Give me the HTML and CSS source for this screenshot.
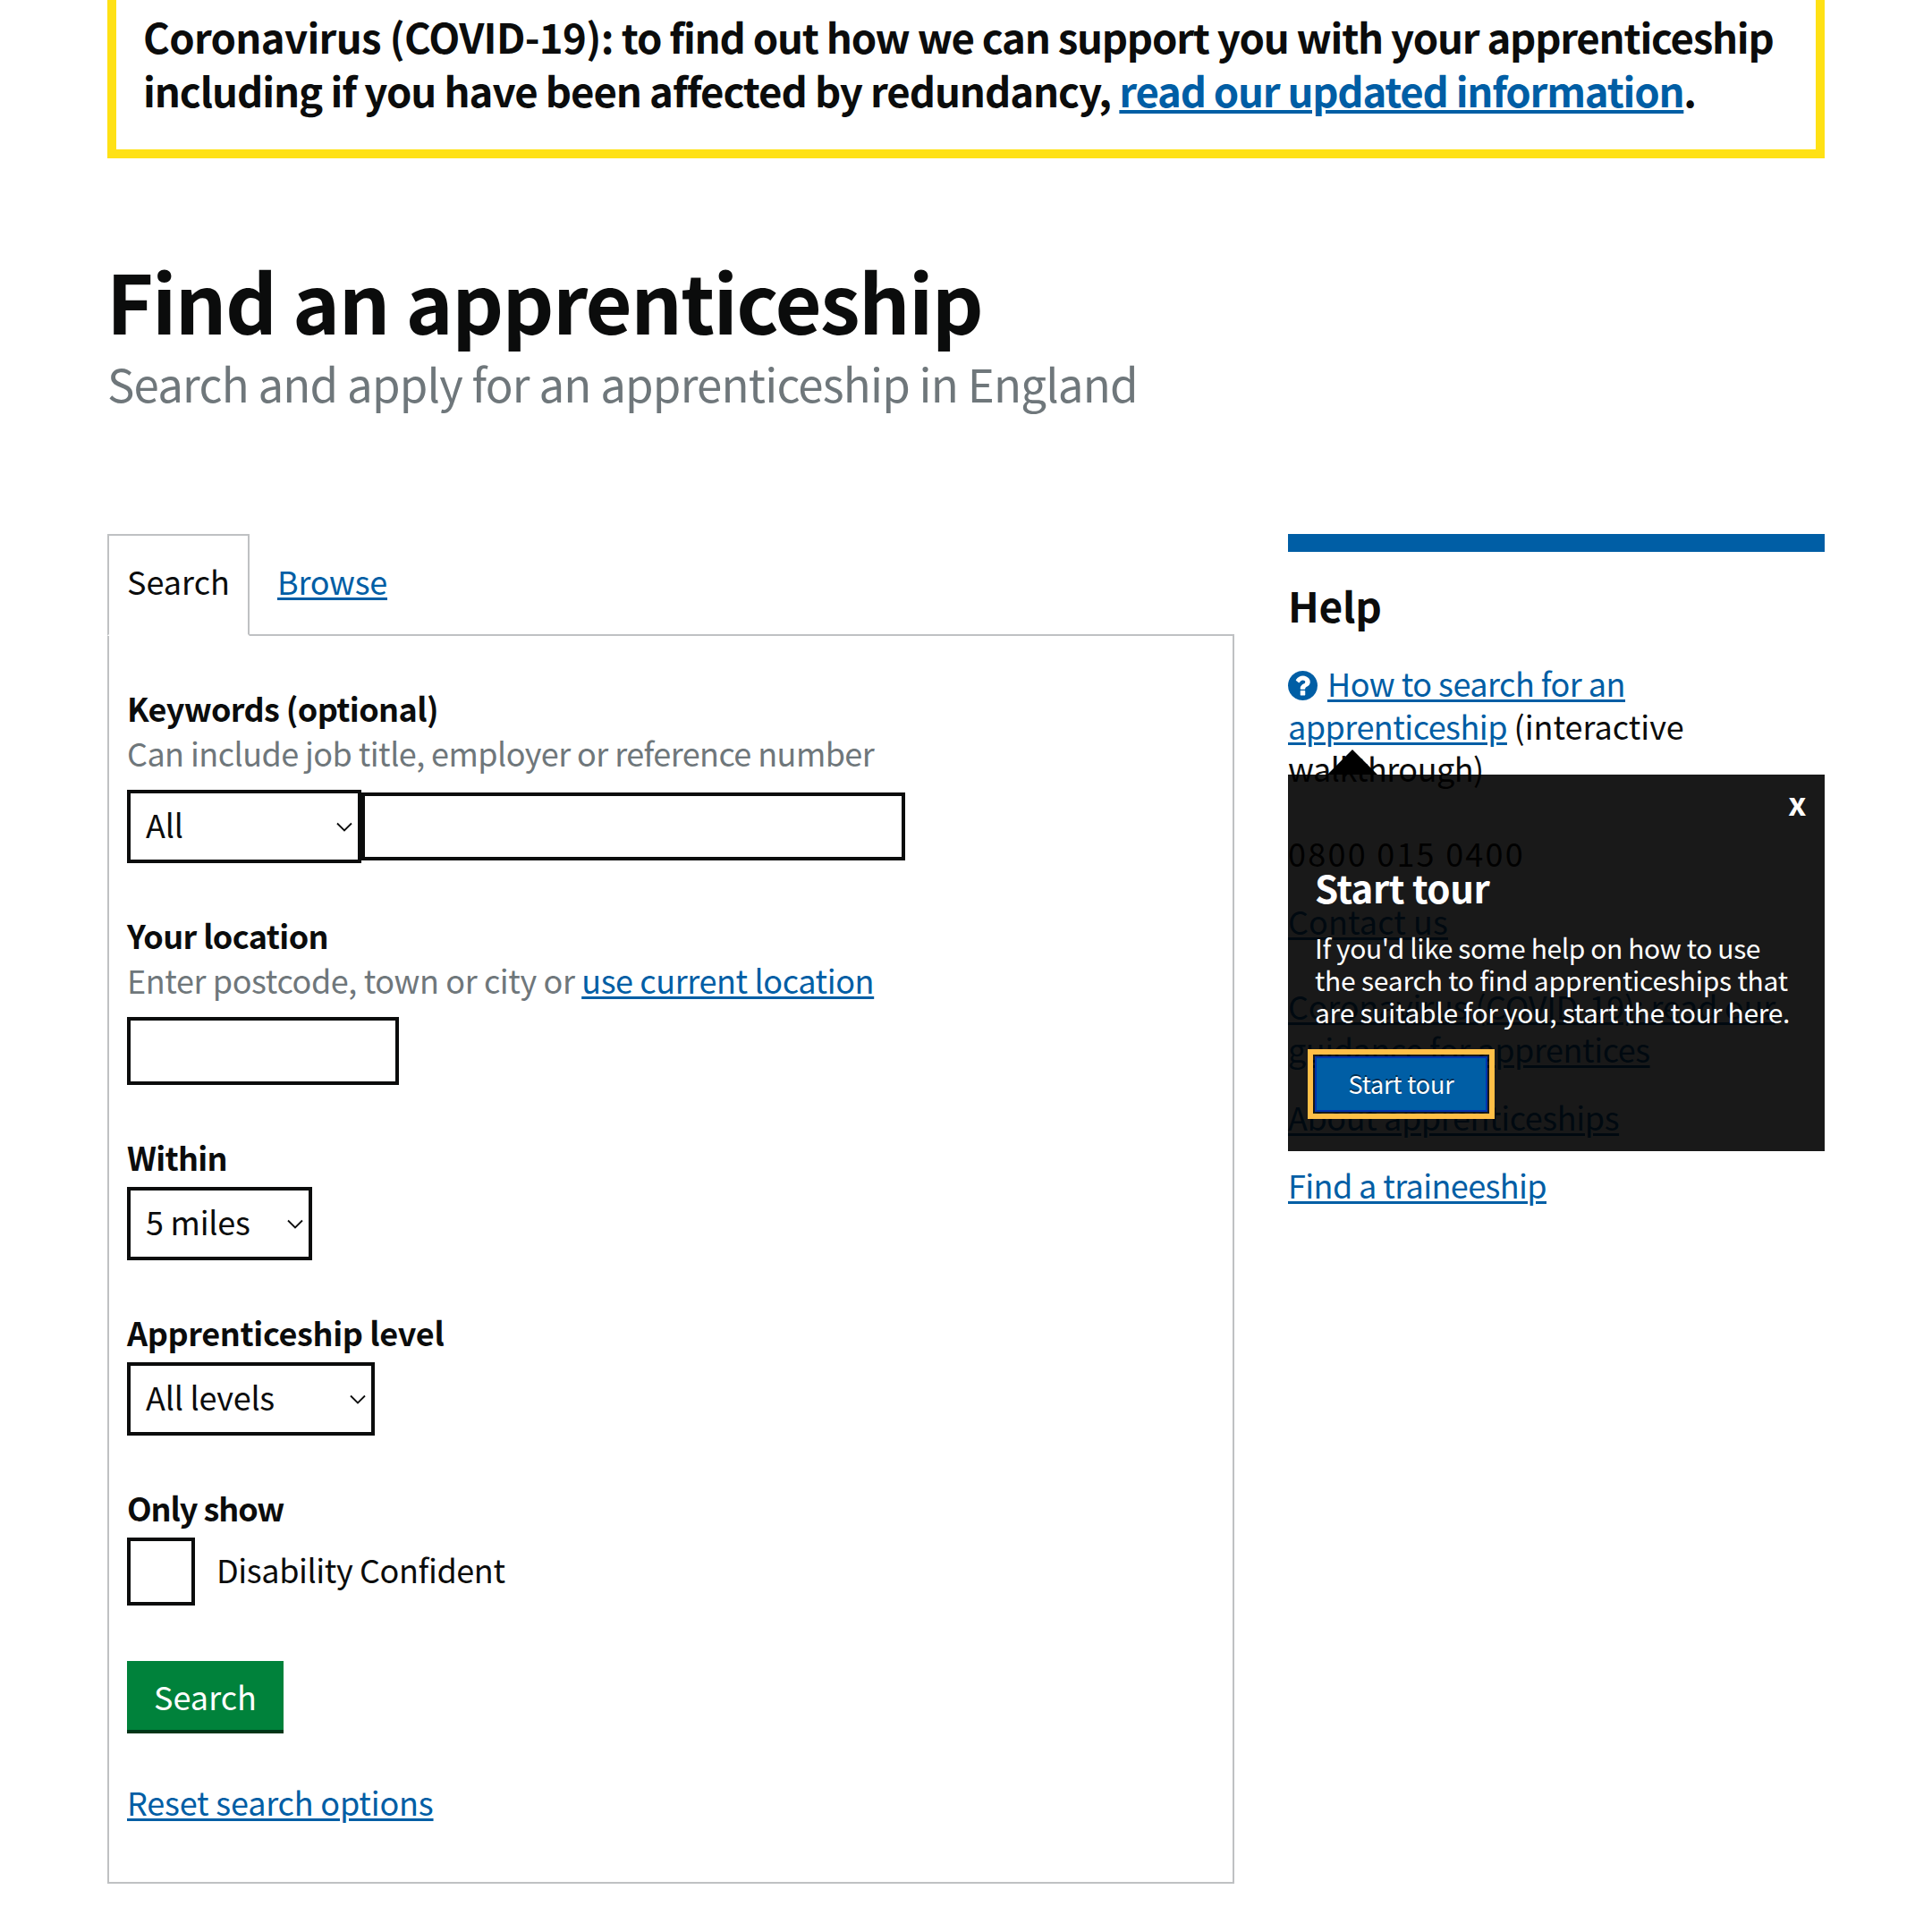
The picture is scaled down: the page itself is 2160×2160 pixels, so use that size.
FILE: index.html
```html
<!DOCTYPE html>
<html lang="en">
<head>
<meta charset="utf-8">
<title>Find an apprenticeship</title>
<link rel="stylesheet" href="styles.css">
</head>
<body>
<div class="page">
  <div class="banner">
    <p class="banner-text"><span class="banner-lead">Coronavirus (COVID-19):</span><span class="banner-rest"> to find out how we can support you with your apprenticeship</span><br>including if you have been affected by redundancy, <a class="banner-link" href="#">read our updated information</a>.</p>
  </div>

  <header class="heading">
    <h1 class="title">Find an apprenticeship</h1>
    <p class="subtitle">Search and apply for an apprenticeship in England</p>
  </header>

  <div class="columns">
    <main class="main">
      <nav class="tabs">
        <span class="tab tab-active">Search</span>
        <a class="tab" href="#">Browse</a>
      </nav>
      <form class="panel">
        <div class="group">
          <label class="label label-keywords">Keywords (optional)</label>
          <p class="hint hint-keywords">Can include job title, employer or reference number</p>
          <div class="field-row">
            <div class="select select-all"><span>All</span><svg class="chevron" viewBox="0 0 18 11"><path d="M1 1.500 9 9.500 17 1.500"/></svg></div>
            <div class="input input-keywords"></div>
          </div>
        </div>
        <div class="group">
          <label class="label label-location">Your location</label>
          <p class="hint">Enter postcode, town or city or <a href="#">use current location</a></p>
          <div class="input input-location"></div>
        </div>
        <div class="group">
          <label class="label label-within">Within</label>
          <div class="select select-within"><span>5 miles</span><svg class="chevron" viewBox="0 0 18 11"><path d="M1 1.500 9 9.500 17 1.500"/></svg></div>
        </div>
        <div class="group">
          <label class="label label-level">Apprenticeship level</label>
          <div class="select select-level"><span>All levels</span><svg class="chevron" viewBox="0 0 18 11"><path d="M1 1.500 9 9.500 17 1.500"/></svg></div>
        </div>
        <div class="group">
          <label class="label label-only">Only show</label>
          <div class="check-row">
            <div class="checkbox"></div>
            <span class="check-label">Disability Confident</span>
          </div>
        </div>
        <button class="search-button" type="button">Search</button>
        <p class="reset"><a href="#">Reset search options</a></p>
      </form>
    </main>

    <aside class="help">
      <h2 class="help-title">Help</h2>
      <p class="help-item help-walk"><svg class="help-icon" viewBox="0 0 1536 1536"><path d="M896 1248v-192q0-14-9-23t-23-9h-192q-14 0-23 9t-9 23v192q0 14 9 23t23 9h192q14 0 23-9t9-23zm256-672q0-88-55.500-163t-138.500-116-170-41q-243 0-371 213-15 24 8 42l132 100q7 6 19 6 16 0 25-12 53-68 86-92 34-24 86-24 48 0 85.500 26t37.500 59q0 38-20 61t-68 45q-63 28-115.500 86.500t-52.500 125.500v36q0 14 9 23t23 9h192q14 0 23-9t9-23q0-19 21.500-49.500t54.500-49.500q32-18 49-28.500t46-35 44.500-48 28-60.500 12.500-81zm384 192q0 209-103 385.500t-279.500 279.500-385.500 103-385.500-103-279.500-279.500-103-385.500 103-385.500 279.500-279.500 385.500-103 385.500 103 279.500 279.500 103 385.500z"/></svg><a href="#">How to search for an<br>apprenticeship</a> <span class="walk-note">(interactive</span><br>walkthrough)</p>
      <p class="help-item help-phone">0800 015 0400</p>
      <p class="help-item help-contact"><a href="#">Contact us</a></p>
      <p class="help-item help-covid"><a href="#"><span class="covid-lead">Coronavirus (COVID-19): read our</span><br>guidance for apprentices</a></p>
      <p class="help-item help-about"><a href="#">About apprenticeships</a></p>
      <p class="help-item help-trainee"><a href="#">Find a traineeship</a></p>

      <section class="tour">
        <span class="tour-close">x</span>
        <h3 class="tour-title">Start tour</h3>
        <p class="tour-text"><span class="tour-line-1">If you'd like some help on how to use</span><br>the search to find apprenticeships that<br><span class="tour-line-3">are suitable for you, start the tour here.</span></p>
        <button class="tour-button" type="button">Start tour</button>
      </section>
    </aside>
  </div>
</div>
</body>
</html>
```
FILE: styles.css
```css
* { box-sizing: border-box; }

body {
  margin: 0;
  background: #fff;
  color: #0b0c0c;
  font: 36px/48px "Noto Sans CJK SC", "Noto Sans", sans-serif;
  letter-spacing: -0.4px;
}

h1, h2, h3, p { margin: 0; }

a {
  color: #005ea5;
  text-decoration: underline;
  text-decoration-thickness: 3px;
  text-underline-offset: 3px;
}

button { font-family: inherit; }

.page { width: 1920px; margin: 0 auto; }

/* Announcement */
.banner {
  height: 177px;
  padding: 10px 0 0 30px;
  border: 10px solid #ffe115;
  border-top: 0;
}
.banner-text {
  font-size: 45.5px;
  font-weight: 700;
  line-height: 60px;
  letter-spacing: -1.07px;
  white-space: nowrap;
}
.banner-lead { letter-spacing: -0.7px; }
.banner-rest { letter-spacing: -1.22px; }
.banner-link {
  letter-spacing: -1.23px;
  text-decoration-thickness: 4px;
}

/* Page heading */
.heading { padding-top: 108px; }
.title {
  margin-left: -1px;
  font-size: 90px;
  line-height: 100px;
  letter-spacing: -1.6px;
}
.subtitle {
  margin-top: 13px;
  color: #6f777b;
  font-size: 51px;
  line-height: 60px;
  letter-spacing: -0.82px;
}

.columns {
  display: flex;
  gap: 60px;
  margin-top: 139px;
}
.main { width: 1260px; }

/* Tabs */
.tabs { display: flex; height: 114px; }
.tab {
  height: 114px;
  padding: 28px 0 0 31px;
  letter-spacing: -0.26px;
}
.tab-active {
  position: relative;
  width: 159px;
  padding-left: 20px;
  border: 2px solid #bfc1c3;
  border-bottom: 2px solid #fff;
  background: #fff;
  padding-top: 26px;
  letter-spacing: 0;
}

/* Search form */
.panel {
  height: 1397px;
  margin-top: -2px;
  padding: 56px 20px 0;
  border: 2px solid #bfc1c3;
}
.group { margin-bottom: 56px; }
.label { display: block; font-weight: 700; }
.label-keywords { letter-spacing: -0.61px; }
.label-location { letter-spacing: -0.6px; }
.label-within { letter-spacing: -0.68px; }
.label-level { letter-spacing: -0.36px; }
.label-only { letter-spacing: -1.1px; }
.hint { margin-top: 2px; color: #6f777b; }
.hint-keywords { letter-spacing: -0.57px; }
.field-row { display: flex; align-items: center; margin-top: 18px; }

.input { height: 76px; border: 4px solid #0b0c0c; }
.input-keywords { width: 608px; }
.input-location { width: 304px; margin-top: 18px; }

.select {
  display: flex;
  align-items: center;
  justify-content: space-between;
  height: 82px;
  padding: 0 6px 6px 17px;
  border: 4px solid #0b0c0c;
  letter-spacing: -0.24px;
}
.select-all { width: 262px; }
.select-within { width: 207px; margin-top: 10px; }
.select-level { width: 277px; margin-top: 10px; }
.chevron {
  width: 18px;
  height: 11px;
  margin-top: 7px;
  fill: none;
  stroke: #0b0c0c;
  stroke-width: 1.8;
}

.check-row { display: flex; align-items: center; gap: 24px; margin-top: 10px; }
.checkbox { width: 76px; height: 76px; border: 4px solid #0b0c0c; }
.check-label { margin-bottom: 6px; }

.search-button {
  display: block;
  width: 175px;
  height: 81px;
  margin-top: 62px;
  padding: 0;
  border: 0;
  border-bottom: 4px solid #003618;
  background: #00823b;
  color: #fff;
  font-size: 36px;
  line-height: 48px;
}
.reset { margin-top: 52px; letter-spacing: -0.19px; }

/* Help sidebar */
.help {
  position: relative;
  width: 600px;
  border-top: 20px solid #005ea5;
  line-height: 47.5px;
  white-space: nowrap;
}
.help-title {
  margin: 29px 0 34px;
  font-size: 46px;
  line-height: 60px;
  letter-spacing: -0.3px;
}
.help-icon {
  width: 33px;
  height: 33px;
  margin-right: 11px;
  vertical-align: -4px;
  fill: #005ea5;
}
.help-item { margin-bottom: 28.5px; }
.help-walk { height: 142.5px; margin-bottom: 47.5px; letter-spacing: -0.52px; }
.walk-note { letter-spacing: 0; }
.help-phone { letter-spacing: 2.24px; }
.help-contact { margin-bottom: 47.5px; letter-spacing: 0.1px; }
.help-covid { letter-spacing: -0.45px; }
.covid-lead { letter-spacing: -0.22px; }
.help-trainee { letter-spacing: -0.61px; }

/* Guided tour popover */
.tour {
  position: absolute;
  top: 249px;
  left: 0;
  width: 600px;
  height: 421px;
  padding: 102px 30px 0;
  background: rgba(0, 0, 0, 0.9);
  color: #fff;
}
.tour::before {
  content: "";
  position: absolute;
  top: -28px;
  left: 44px;
  border: 28px solid transparent;
  border-top: 0;
  border-bottom-color: #000;
}
.tour-close {
  position: absolute;
  top: 7px;
  right: 21px;
  font-weight: 700;
}
.tour-title {
  font-size: 42px;
  line-height: 48px;
  letter-spacing: -0.5px;
}
.tour-text {
  margin-top: 25px;
  font-size: 30px;
  line-height: 36px;
  letter-spacing: -0.21px;
}
.tour-line-1 { letter-spacing: -0.4px; }
.tour-line-3 { letter-spacing: -0.28px; }
.tour-button {
  display: block;
  width: 193px;
  height: 62px;
  margin-top: 32px;
  padding: 0 0 2px;
  border: 2px solid #0033ad;
  outline: 6px solid #ffbf47;
  outline-offset: 2px;
  background: #005ea5;
  color: #fff;
  font-size: 27px;
  letter-spacing: -0.18px;
  text-shadow: 0 -2px 0 rgba(0, 0, 0, 0.5);
}
```
